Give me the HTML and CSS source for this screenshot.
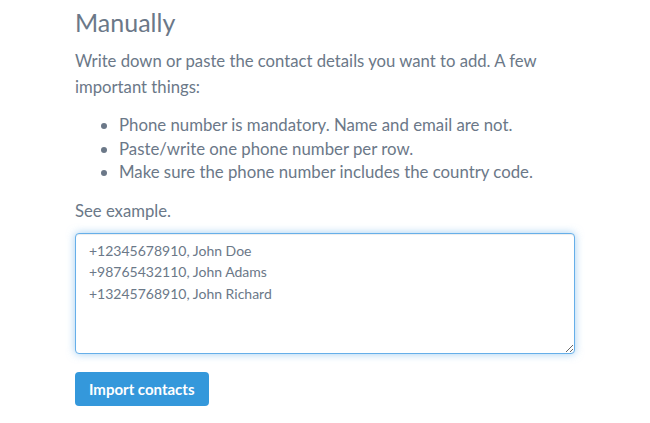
FILE: index.html
```html
<!DOCTYPE html>
<html lang="en">
<head>
    <meta charset="UTF-8">
    <meta name="viewport" content="width=device-width, initial-scale=1.0">
    <title>Import contacts</title>
    <link rel="stylesheet" href="styles.css">
</head>
<body>

<div class="manual">
    <h2>Manually</h2>
    <p>Write down or paste the contact details you want to add. A few important things:</p>
    <ul>
        <li>Phone number is mandatory. Name and email are not.</li>
        <li>Paste/write one phone number per row.</li>
        <li>Make sure the phone number includes the country code.</li>
    </ul>
    <p class="hint">See example.</p>
    <textarea class="contacts">+12345678910, John Doe
+98765432110, John Adams
+13245768910, John Richard</textarea>
    <button class="import">Import contacts</button>
</div>

</body>
</html>
```

FILE: styles.css
```css
body {
    background-color: #FFFFFF;
    color: #6B7888;
    font-family: Lato, "Open Sans", sans-serif;
    margin: 0;
}

.manual {
    width: 500px;
    padding: 4px 0 0 75px;
}

.manual h2 {
    font-size: 25px;
    font-weight: 400;
    margin: 0 0 8px;
    line-height: 36px;
}

.manual p {
    font-size: 16.7px;
    line-height: 26px;
    margin: 0 0 13px;
}

.manual ul {
    font-size: 16.8px;
    line-height: 23.5px;
    margin: 0 0 14px;
    padding-left: 44px;
}

.manual .hint {
    margin-bottom: 9px;
}

.contacts {
    display: block;
    box-sizing: border-box;
    width: 500px;
    height: 121px;
    padding: 6px 13px;
    border: 1px solid #66AFE9;
    border-radius: 4px;
    box-shadow: inset 0 1px 1px rgba(0, 0, 0, .075), 0 0 8px rgba(102, 175, 233, .6);
    outline: none;
    color: #6B7888;
    font-family: inherit;
    font-size: 14px;
    line-height: 21.5px;
    resize: vertical;
}

.import {
    margin-top: 18px;
    background-color: #3498DB;
    color: #FFFFFF;
    border: none;
    border-radius: 4px;
    padding: 0 14px;
    height: 34px;
    font-family: inherit;
    font-size: 15px;
    font-weight: 700;
    cursor: pointer;
}
```
